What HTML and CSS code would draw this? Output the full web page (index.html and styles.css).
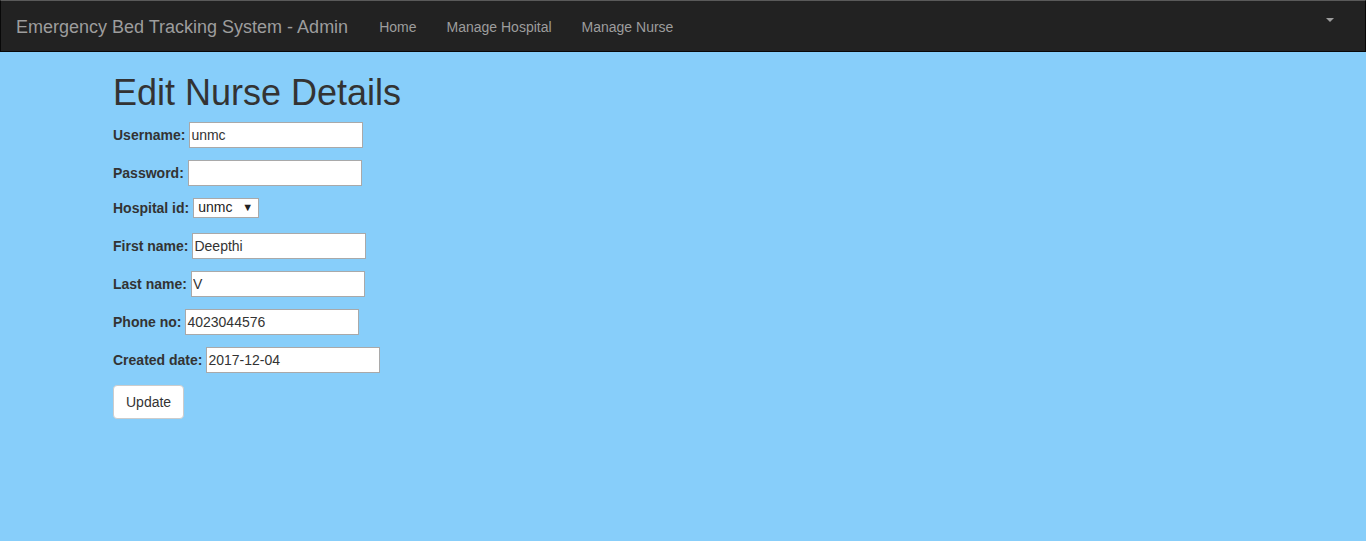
FILE: index.html
```html
<!DOCTYPE html>
<html lang="en">
<head>
<meta charset="utf-8">
<title>Edit Nurse Details</title>
<link rel="stylesheet" href="styles.css">
</head>
<body>
<nav class="navbar">
  <a class="brand" href="#">Emergency Bed Tracking System - Admin</a>
  <ul class="nav">
    <li><a href="#">Home</a></li>
    <li><a href="#">Manage Hospital</a></li>
    <li><a href="#">Manage Nurse</a></li>
  </ul>
  <a class="dropdown" href="#"><span class="caret"></span></a>
</nav>
<main class="container">
  <h1 class="title">Edit Nurse Details</h1>
  <form class="form">
    <div class="row"><label>Username:</label><input class="field" type="text" value="unmc"></div>
    <div class="row"><label>Password:</label><input class="field" type="password" value=""></div>
    <div class="row row-select"><label>Hospital id:</label>
      <div class="select"><span>unmc</span><span class="arrow">&#9660;</span></div>
    </div>
    <div class="row"><label>First name:</label><input class="field" type="text" value="Deepthi"></div>
    <div class="row"><label>Last name:</label><input class="field" type="text" value="V"></div>
    <div class="row"><label>Phone no:</label><input class="field" type="text" value="4023044576"></div>
    <div class="row"><label>Created date:</label><input class="field" type="text" value="2017-12-04"></div>
    <button class="btn" type="button">Update</button>
  </form>
</main>
</body>
</html>
```
FILE: styles.css
```css
html, body {
  margin: 0;
  padding: 0;
}
body {
  background: #87cefa;
  font-family: "Liberation Sans", Arial, sans-serif;
  font-size: 14px;
  line-height: 1.42857;
  color: #333;
  min-height: 541px;
}
.navbar {
  display: flex;
  align-items: flex-start;
  height: 50px;
  background: #222;
  border: 1px solid #080808;
  border-top-color: #5a5a5a;
  padding: 0 0 0 15px;
}
.brand {
  display: block;
  padding: 16px 16px 14px 0;
  font-size: 18px;
  line-height: 20px;
  height: 20px;
  color: #9d9d9d;
  text-decoration: none;
}
.nav {
  display: flex;
  list-style: none;
  margin: 0;
  padding: 0;
}
.nav a {
  display: block;
  padding: 16px 15px 14px;
  line-height: 20px;
  color: #9d9d9d;
  text-decoration: none;
}
.dropdown {
  margin-left: auto;
  margin-right: 31px;
  padding-top: 16px;
  display: block;
  line-height: 0;
}
.caret {
  display: inline-block;
  width: 0;
  height: 0;
  border-top: 4px solid #9d9d9d;
  border-left: 4px solid transparent;
  border-right: 4px solid transparent;
}
.container {
  width: 1170px;
  margin: 0 auto;
  padding: 0 15px;
  box-sizing: border-box;
}
.title {
  font-size: 36px;
  font-weight: 500;
  line-height: 1.1;
  margin: 21px 0 9px;
  color: #333;
}
.form {
  display: flex;
  flex-direction: column;
  align-items: flex-start;
}
.row {
  display: flex;
  align-items: center;
  gap: 4px;
  height: 26px;
  margin-bottom: 12px;
}
.row-select {
  height: 20px;
  margin-bottom: 15px;
}
label {
  font-weight: bold;
  padding-top: 3px;
}
.field {
  box-sizing: border-box;
  width: 174px;
  height: 26px;
  margin: 0;
  padding: 1px 1px 1px;
  border: 1px solid #a9a9a9;
  background: #fff;
  font-family: "Liberation Sans", Arial, sans-serif;
  font-size: 14px;
  color: #333;
  outline: none;
}
.select {
  box-sizing: border-box;
  display: flex;
  align-items: center;
  justify-content: space-between;
  width: 66px;
  height: 20px;
  padding: 1px 5px 0 4px;
  border: 1px solid #a9a9a9;
  background: #fff;
  font-size: 14px;
  color: #222;
}
.arrow {
  font-size: 11px;
  color: #222;
}
.btn {
  box-sizing: border-box;
  height: 34px;
  padding: 6px 12px;
  border: 1px solid #ccc;
  border-radius: 4px;
  background: #fff;
  font-family: "Liberation Sans", Arial, sans-serif;
  font-size: 14px;
  line-height: 20px;
  color: #333;
}
```
